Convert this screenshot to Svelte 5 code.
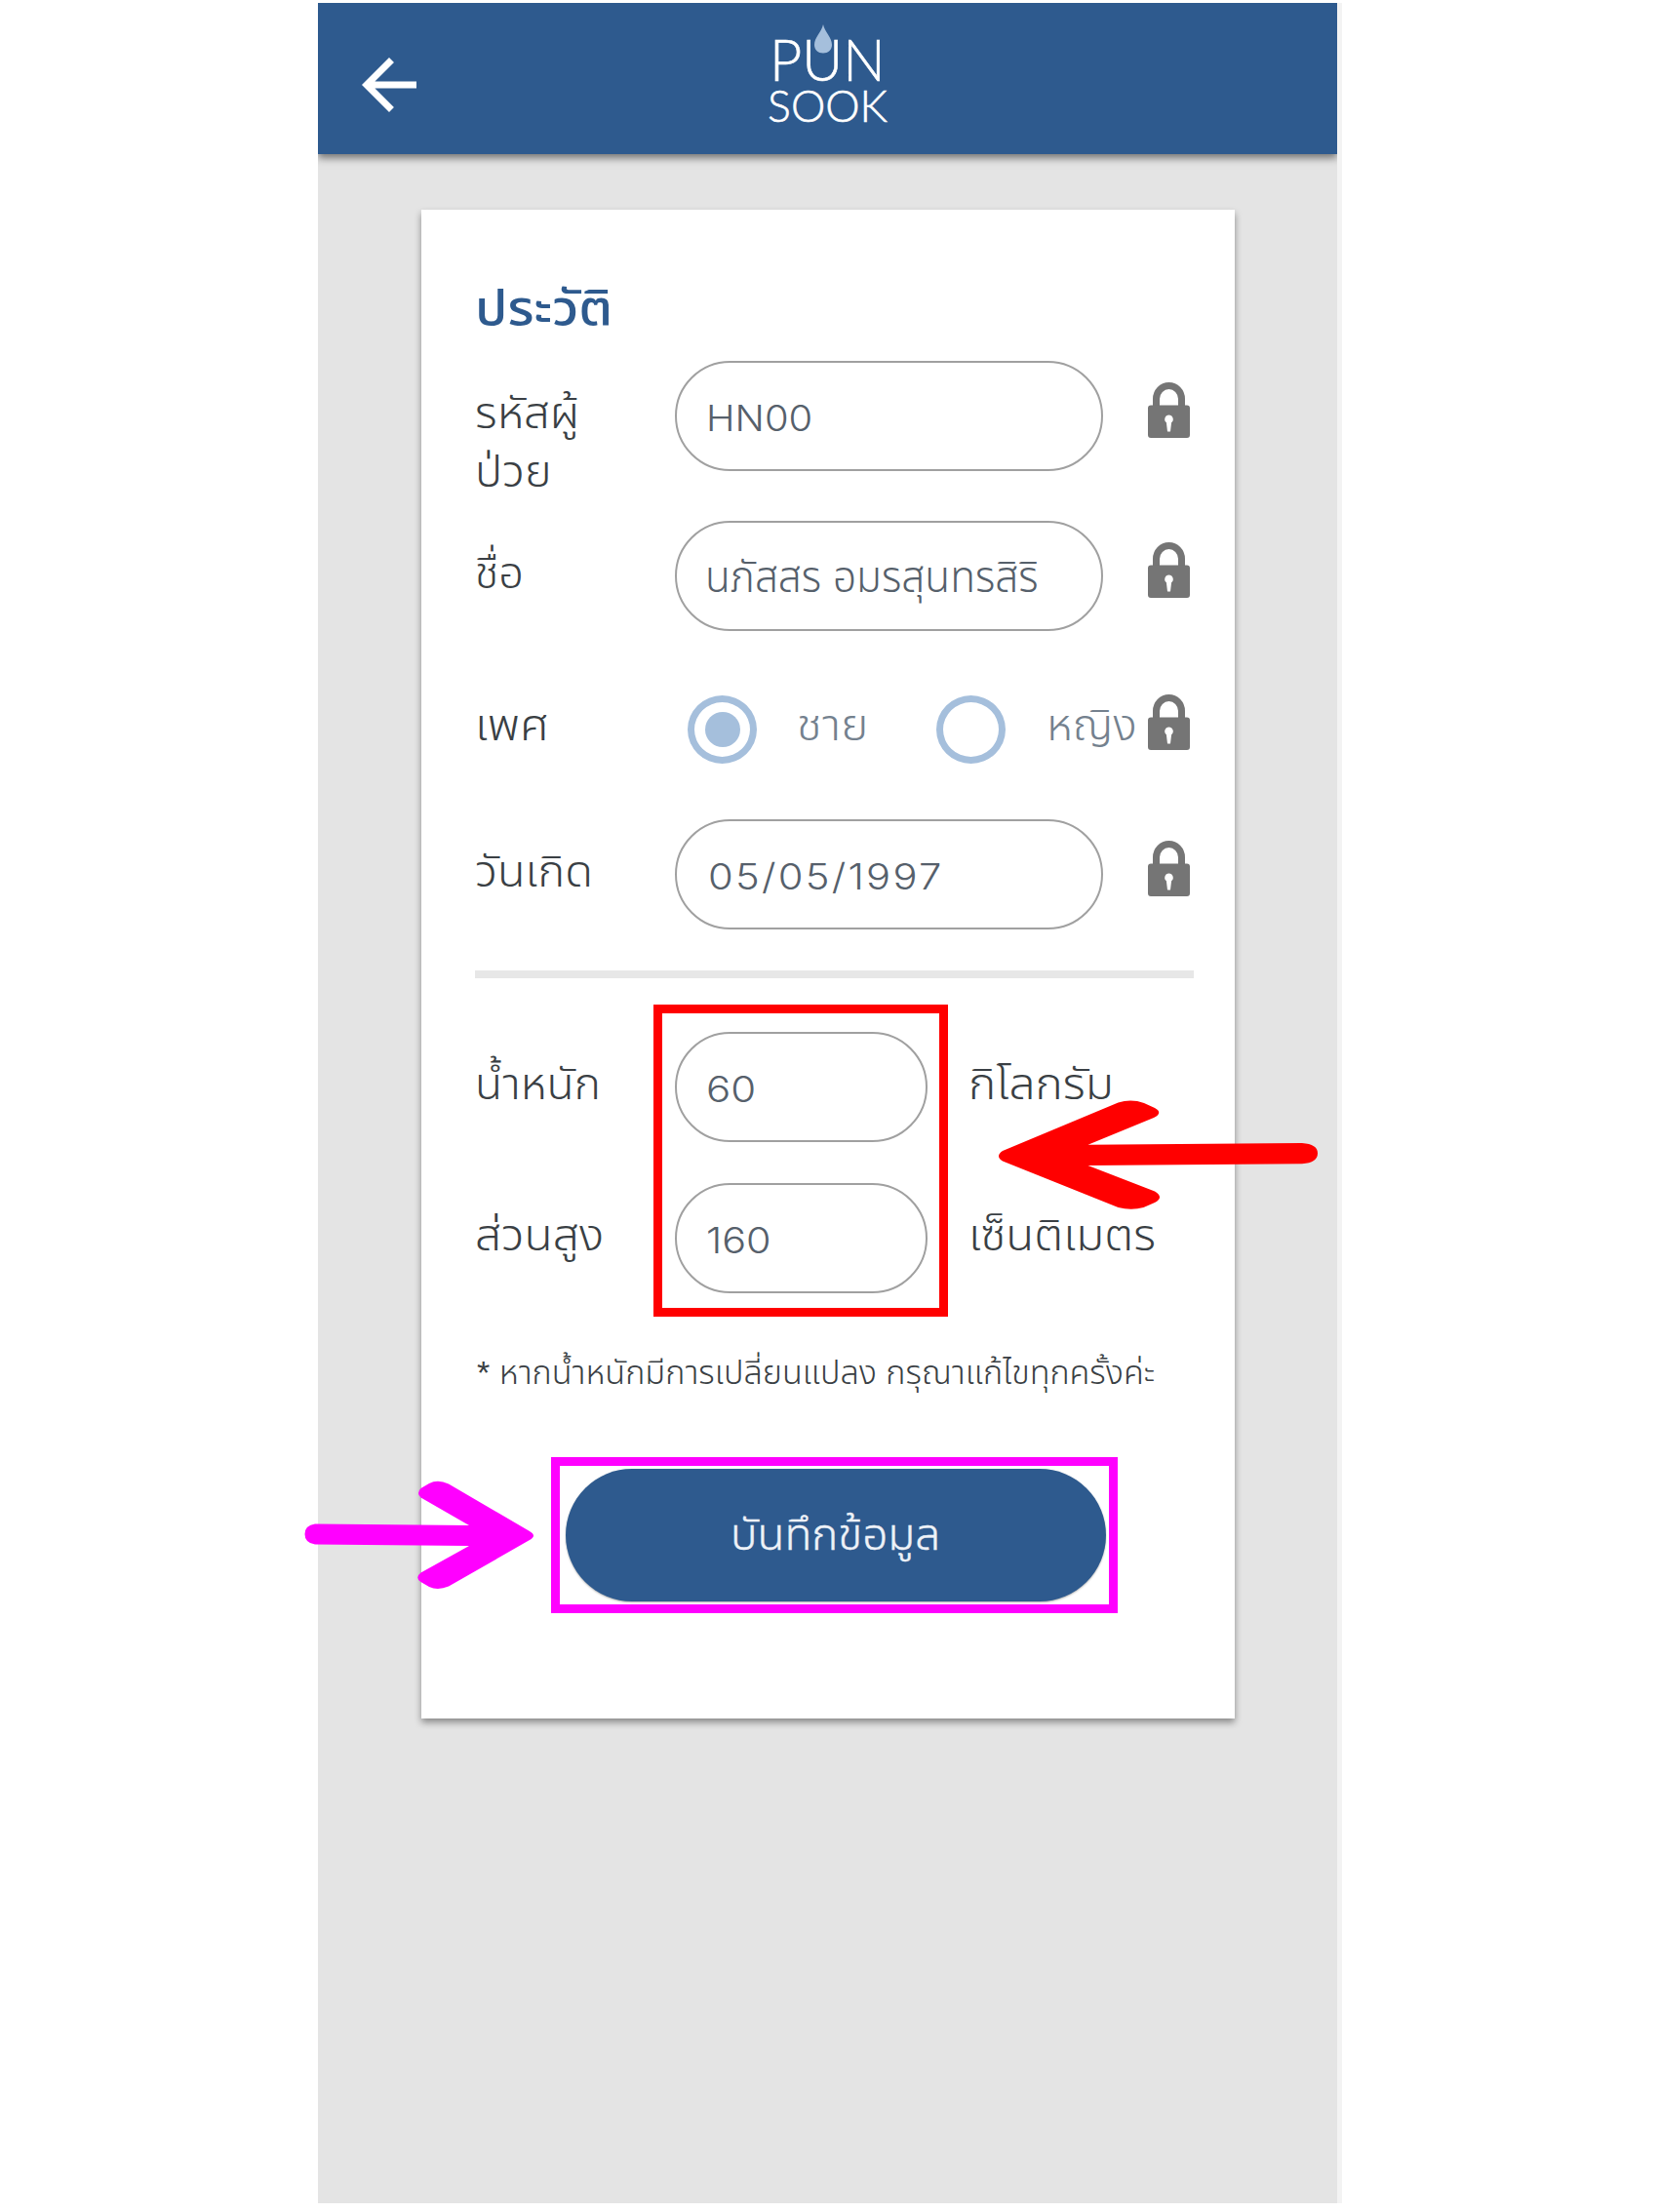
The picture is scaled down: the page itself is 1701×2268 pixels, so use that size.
<script>
  // Stretches a piece of text horizontally so that it fills the given width.
  function fit(node, width) {
    node.style.transform = `scaleX(${width / node.offsetWidth})`;
  }
</script>

{#snippet lock()}
  <svg class="lock" viewBox="0 0 43 58" aria-hidden="true">
    <path class="shackle" d="M8.500 26V17a13 13.500 0 0 1 26 0V26" />
    <path
      fill-rule="evenodd"
      d="M3 23.500H40a3 3 0 0 1 3 3V54a3 3 0 0 1-3 3H3a3 3 0 0 1-3-3V26.500a3 3 0 0 1 3-3ZM21.500 33.500a4.300 4.300 0 0 0-2.600 7.700L20 50.500H23L24.100 41.200A4.300 4.300 0 0 0 21.500 33.500Z"
    />
  </svg>
{/snippet}

<div class="page">
  <main class="phone">
    <header>
      <svg class="back" viewBox="0 0 24 24" aria-hidden="true">
        <path d="M20 11H7.830l5.590-5.590L12 4l-8 8 8 8 1.410-1.410L7.830 13H20v-2z" />
      </svg>
      <div class="logo">
        <div class="pun"><span use:fit={119}>PUN</span></div>
        <div class="sook"><span use:fit={123}>SOOK</span></div>
        <svg class="drop" viewBox="0 0 20 30" aria-hidden="true">
          <path d="M10 0C11.500 8 19 13 19 21C19 26 15 29.500 10 29.500S1 26 1 21C1 13 8.500 8 10 0Z" />
        </svg>
      </div>
    </header>

    <section class="card">
      <h1><span use:fit={141}>ประวัติ</span></h1>

      <div class="row code">
        <div class="label">
          <div><span use:fit={107}>รหัสผู้</span></div>
          <div><span use:fit={78}>ป่วย</span></div>
        </div>
        <div class="field number"><span use:fit={109}>HN00</span></div>
        {@render lock()}
      </div>

      <div class="row name">
        <div class="label"><span use:fit={50}>ชื่อ</span></div>
        <div class="field"><span use:fit={342}>นภัสสร อมรสุนทรสิริ</span></div>
        {@render lock()}
      </div>

      <div class="row gender">
        <div class="label"><span use:fit={76}>เพศ</span></div>
        <div class="options">
          <div class="radio on"></div>
          <div class="option"><span use:fit={73}>ชาย</span></div>
          <div class="radio"></div>
          <div class="option"><span use:fit={93}>หญิง</span></div>
        </div>
        {@render lock()}
      </div>

      <div class="row birth">
        <div class="label"><span use:fit={121}>วันเกิด</span></div>
        <div class="field number date"><span use:fit={241}>05/05/1997</span></div>
        {@render lock()}
      </div>

      <hr />

      <div class="row measure">
        <div class="label"><span use:fit={129}>น้ำหนัก</span></div>
        <div class="field number"><span use:fit={51}>60</span></div>
        <div class="label"><span use:fit={149}>กิโลกรัม</span></div>
      </div>

      <div class="row measure">
        <div class="label"><span use:fit={132}>ส่วนสูง</span></div>
        <div class="field number"><span use:fit={67}>160</span></div>
        <div class="label"><span use:fit={192}>เซ็นติเมตร</span></div>
      </div>

      <p class="note"><span use:fit={695}>* หากน้ำหนักมีการเปลี่ยนแปลง กรุณาแก้ไขทุกครั้งค่ะ</span></p>

      <div class="save"><span use:fit={215}>บันทึกข้อมูล</span></div>
    </section>
  </main>

  <div class="mark red"></div>
  <div class="mark pink"></div>
  <svg class="arrows" viewBox="0 0 1701 2268" aria-hidden="true">
    <path
      class="red-arrow"
      d="M1028 1180L1146.500 1130.500Q1160 1126.500 1173 1131L1184 1136Q1193 1141 1183 1146L1115.500 1173.800L1335 1172Q1351 1173 1351 1182.500T1335 1193.300L1115.500 1195L1184 1221.500Q1194 1227.500 1184 1233L1172.500 1238Q1160 1241.500 1146.500 1238L1028 1190.500Q1020 1185.500 1028 1180Z"
    />
    <path
      class="pink-arrow"
      d="M543 1570L460 1521.500Q449 1516.500 440 1521L431.500 1526Q426.500 1531 431.500 1535.500L481 1564L323 1562.500Q312.500 1564 312.500 1573T323 1583.500L481 1585L431.500 1612.500Q425 1617.500 431.500 1622L440 1627Q449 1631 460 1626.500L543 1579Q551 1574.500 543 1570Z"
    />
  </svg>
</div>

<style>
  :global(body) {
    background: #fff;
  }
  .page {
    position: relative;
    width: 1701px;
    height: 2268px;
    box-sizing: border-box;
    padding: 3px 0 0 326px;
    overflow: hidden;
    font-family: "Liberation Sans", "Noto Sans Thai", sans-serif;
    font-size: 45px;
    font-weight: 300;
    color: #3a3f44;
  }
  .phone {
    width: 1045px;
    height: 2256px;
    background: #e4e4e4;
    border-right: 5px solid #f3f3f3;
  }
  span {
    display: inline-block;
    transform-origin: 0 50%;
    white-space: nowrap;
  }
  header {
    display: flex;
    height: 155px;
    background: #2e5a8e;
    box-shadow: 0 4px 8px rgba(0, 0, 0, 0.5);
    clip-path: inset(0 0 -20px 0);
  }
  .back {
    width: 84px;
    height: 84px;
    margin: 42px 0 0 31px;
    fill: #fff;
  }
  .logo {
    position: relative;
    margin-left: 345px;
    font-family: Lato, sans-serif;
    color: #fff;
    -webkit-text-stroke: 0.6px #fff;
  }
  .pun {
    height: 51px;
    margin-top: 32px;
    padding-left: 3px;
    font-size: 60px;
    line-height: 51px;
  }
  .sook {
    height: 44px;
    padding-left: 1px;
    font-size: 45px;
    line-height: 44px;
  }
  .drop {
    position: absolute;
    left: 48px;
    top: 22px;
    width: 20px;
    height: 30px;
    fill: #a5bfdc;
  }
  .card {
    box-sizing: border-box;
    width: 834px;
    height: 1547px;
    margin: 57px 0 0 106px;
    padding: 75px 0 0 57px;
    background: #fff;
    box-shadow: 0 4px 7px rgba(0, 0, 0, 0.4);
  }
  h1 {
    height: 60px;
    margin: -4px 0 24px -2px;
    font-size: 49px;
    font-weight: 500;
    line-height: 60px;
    color: #2e5a8e;
  }
  .row {
    display: grid;
    grid-template-columns: 203px 485px 43px;
    align-items: start;
  }
  .code {
    height: 164px;
  }
  .name {
    height: 156px;
  }
  .gender {
    height: 150px;
  }
  .birth {
    height: 155px;
  }
  .measure {
    grid-template-columns: 203px 303px 200px;
    height: 155px;
  }
  .label {
    margin-left: -2px;
    padding-top: 24px;
    line-height: 60px;
  }
  .field {
    box-sizing: border-box;
    width: 439px;
    height: 113px;
    padding: 26px 0 0 29px;
    border: 2px solid #a0a0a0;
    border-radius: 57px;
    line-height: 60px;
    color: #56606b;
  }
  .number {
    padding-top: 27px;
    padding-left: 30px;
    font-family: Inter, sans-serif;
    font-size: 37px;
  }
  .date {
    padding-left: 32px;
    letter-spacing: 2px;
  }
  .measure .field {
    width: 259px;
  }
  .lock {
    width: 43px;
    height: 58px;
    margin-top: 22px;
    fill: #757575;
  }
  .shackle {
    fill: none;
    stroke: #757575;
    stroke-width: 7px;
  }
  .options {
    display: grid;
    grid-template-columns: 112px 143px 113px 93px;
    padding-left: 13px;
    color: #74818e;
  }
  .option {
    padding-top: 24px;
    line-height: 60px;
  }
  .radio {
    display: flex;
    box-sizing: border-box;
    width: 71px;
    height: 70px;
    margin-top: 23px;
    border: 7px solid #a5bfdc;
    border-radius: 50%;
  }
  .on::before {
    content: "";
    width: 36px;
    height: 36px;
    margin: auto;
    border-radius: 50%;
    background: #a5bfdc;
  }
  hr {
    width: 737px;
    height: 8px;
    margin: 0 0 55px -2px;
    border: 0;
    background: #e7e7e7;
  }
  .note {
    height: 40px;
    margin: 20px 0 1px;
    font-size: 33px;
    line-height: 40px;
  }
  .save {
    box-sizing: border-box;
    width: 554px;
    height: 136px;
    margin: 78px 0 0 91px;
    padding: 38px 0 0 169px;
    border-radius: 68px;
    background: #2e5a8e;
    line-height: 60px;
    color: #eef2f8;
    -webkit-text-stroke: 0.4px #eef2f8;
    box-shadow: 0 1px 2px rgba(0, 0, 0, 0.3);
  }
  .mark {
    position: absolute;
    box-sizing: border-box;
    border: 9px solid #f00;
  }
  .red {
    left: 670px;
    top: 1030px;
    width: 302px;
    height: 320px;
  }
  .pink {
    left: 565px;
    top: 1494px;
    width: 581px;
    height: 160px;
    border-color: #f0f;
  }
  .arrows {
    position: absolute;
    left: 0;
    top: 0;
    width: 1701px;
    height: 2268px;
  }
  .red-arrow {
    fill: #f00;
  }
  .pink-arrow {
    fill: #f0f;
  }
</style>
